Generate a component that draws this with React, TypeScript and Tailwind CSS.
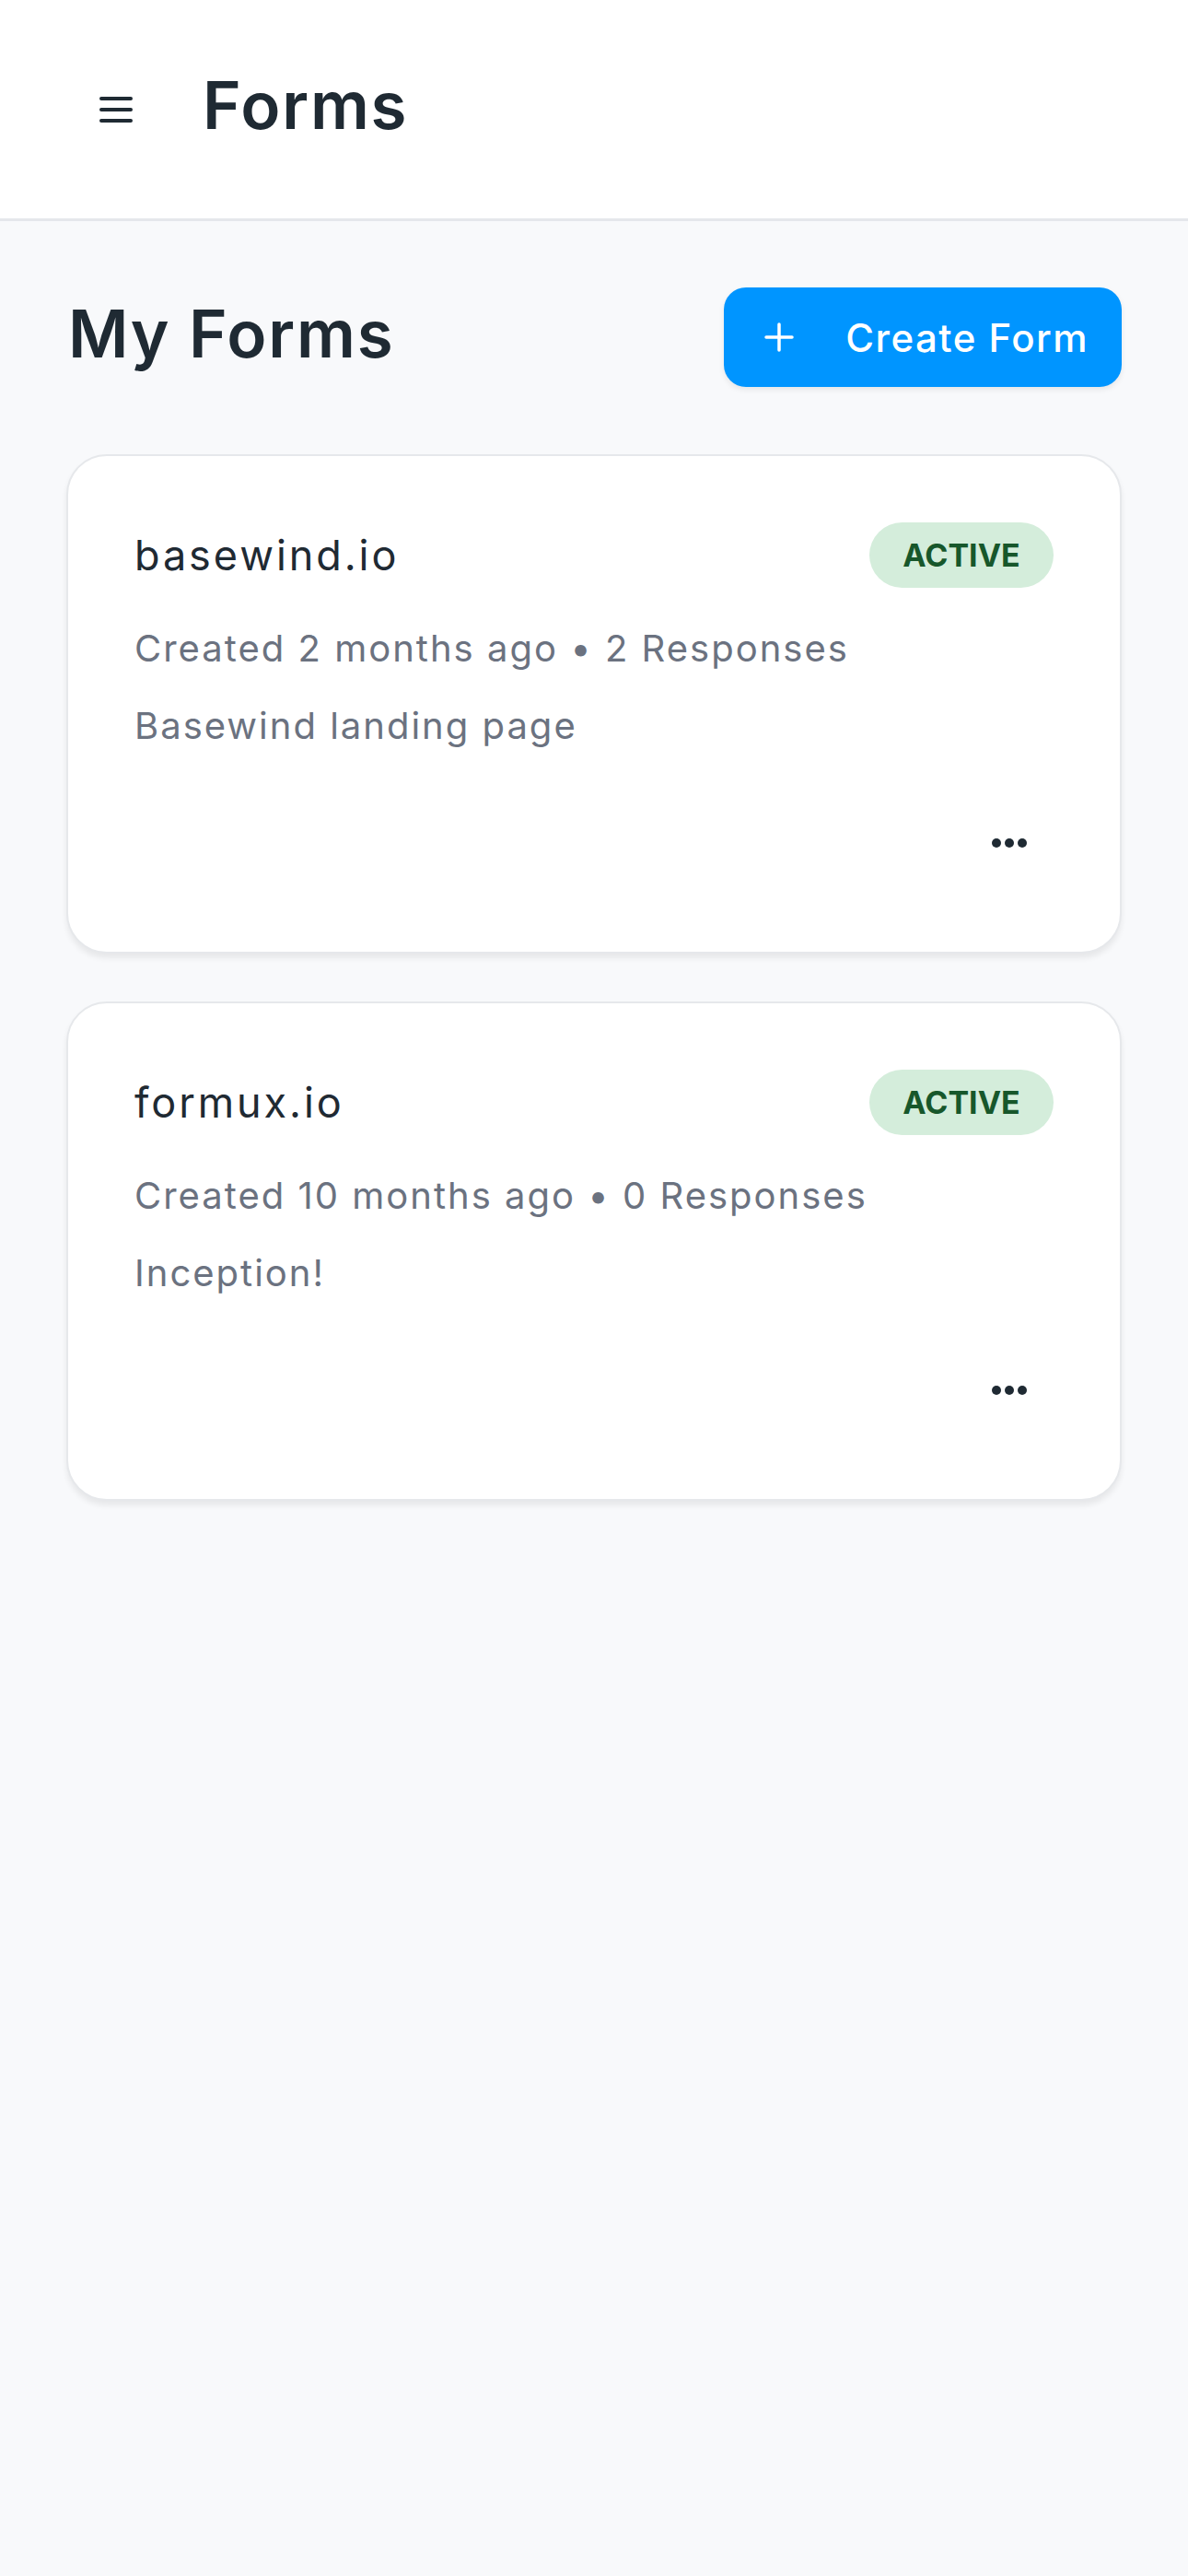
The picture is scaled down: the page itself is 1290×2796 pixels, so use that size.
const forms = [
  {
    name: "basewind.io",
    created: "2 months ago",
    responses: 2,
    description: "Basewind landing page",
  },
  {
    name: "formux.io",
    created: "10 months ago",
    responses: 0,
    description: "Inception!",
  },
];

const MenuIcon = () => (
  <div className="flex flex-col gap-[8px] w-[36px]">
    <span className="block h-[4px] rounded-full bg-[#1f2a33]" />
    <span className="block h-[4px] rounded-full bg-[#1f2a33]" />
    <span className="block h-[4px] rounded-full bg-[#1f2a33]" />
  </div>
);

const PlusIcon = () => (
  <svg width="32" height="32" viewBox="0 0 32 32" fill="none">
    <path
      d="M16 2v28M2 16h28"
      stroke="white"
      strokeWidth="3.5"
      strokeLinecap="round"
    />
  </svg>
);

const FormCard = ({ form }: { form: (typeof forms)[number] }) => {
  return (
    <div className="flex flex-col bg-white border-2 border-[#e6e8eb] rounded-[44px] shadow-[0_5px_6px_rgba(0,0,0,0.07)] p-[72px]">
      <div className="flex h-[71px] items-center justify-between">
        <span className="text-[45px] text-[#1f2a33] tracking-[0.065em]">
          {form.name}
        </span>
        <span className="flex h-[71px] w-[200px] items-center justify-center rounded-full bg-[#d4eddb] text-[34px] font-bold text-[#17572b]">
          ACTIVE
        </span>
      </div>
      <p className="mt-[24px] text-[40px] leading-[84px] text-[#6b7280] tracking-[0.05em]">
        Created {form.created} • {form.responses} Responses
      </p>
      <p className="text-[40px] leading-[84px] text-[#6b7280] tracking-[0.05em]">
        {form.description}
      </p>
      <div className="mt-[39px] flex justify-end">
        <button className="flex h-[92px] w-[92px] items-center justify-center gap-[4px] mr-[2px]">
          <span className="block h-[10px] w-[10px] rounded-full bg-[#1f2a33]" />
          <span className="block h-[10px] w-[10px] rounded-full bg-[#1f2a33]" />
          <span className="block h-[10px] w-[10px] rounded-full bg-[#1f2a33]" />
        </button>
      </div>
    </div>
  );
};

const App = () => {
  return (
    <div className="min-h-screen bg-[#f8f9fb] font-['Inter',sans-serif]">
      <header className="flex h-[240px] items-center gap-[76px] border-b-[3px] border-[#e5e7eb] bg-white pl-[108px]">
        <MenuIcon />
        <h1 className="pb-[8px] text-[71px] font-semibold text-[#1f2a33] tracking-[0.025em]">
          Forms
        </h1>
      </header>

      <main className="px-[72px] pt-[72px]">
        <div className="flex h-[108px] items-center justify-between">
          <h2 className="mb-[8px] pl-[2px] text-[71px] leading-none font-semibold text-[#1f2a33] tracking-[0.025em]">
            My Forms
          </h2>
          <button className="flex h-[108px] items-center gap-[56px] rounded-[24px] bg-[#0095ff] pl-[44px] pr-[36px] shadow-[0_3px_6px_rgba(0,0,0,0.08)]">
            <PlusIcon />
            <span className="text-[42px] font-medium text-white tracking-[0.035em]">
              Create Form
            </span>
          </button>
        </div>

        <div className="mt-[73px] flex flex-col gap-[52px]">
          {forms.map((form) => (
            <FormCard key={form.name} form={form} />
          ))}
        </div>
      </main>
    </div>
  );
};

export default App;
